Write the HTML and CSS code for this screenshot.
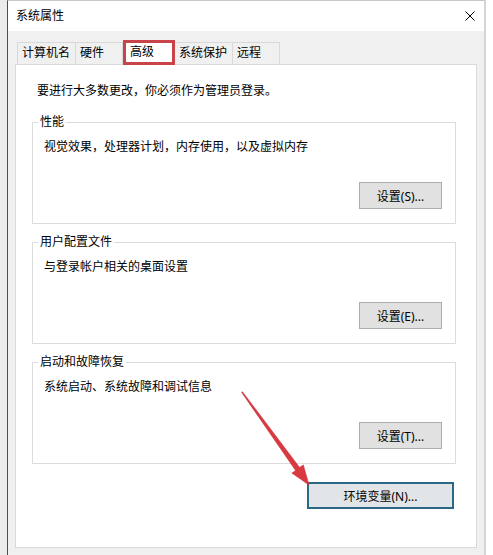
FILE: index.html
```html
<!DOCTYPE html>
<html lang="zh-CN">
<head>
    <meta charset="UTF-8">
    <meta name="viewport" content="width=device-width, initial-scale=1.0">
    <title>系统属性</title>
    <link rel="stylesheet" href="styles.css">
</head>
<body>
    <div class="window">
        <div class="titlebar">
            <span class="title">系统属性</span>
            <svg class="close" width="10" height="10" viewBox="0 0 10 10">
                <path d="M0.5 0.5L9.5 9.5M9.5 0.5L0.5 9.5" stroke="#000" stroke-width="1" fill="none"/>
            </svg>
        </div>
        <div class="sheet">
            <div class="tabs">
                <div class="tab first">计算机名</div>
                <div class="tab">硬件</div>
                <div class="tab active-tab">高级</div>
                <div class="tab">系统保护</div>
                <div class="tab">远程</div>
            </div>
            <div class="panel">
                <p class="notice">要进行大多数更改，你必须作为管理员登录。</p>

                <fieldset class="group">
                    <legend>性能</legend>
                    <p class="desc">视觉效果，处理器计划，内存使用，以及虚拟内存</p>
                    <div class="actions"><button class="btn">设置(S)...</button></div>
                </fieldset>

                <fieldset class="group">
                    <legend>用户配置文件</legend>
                    <p class="desc">与登录帐户相关的桌面设置</p>
                    <div class="actions"><button class="btn">设置(E)...</button></div>
                </fieldset>

                <fieldset class="group">
                    <legend>启动和故障恢复</legend>
                    <p class="desc">系统启动、系统故障和调试信息</p>
                    <div class="actions"><button class="btn">设置(T)...</button></div>
                </fieldset>

                <div class="env-row">
                    <button class="btn btn-default">环境变量(N)...</button>
                </div>
            </div>
        </div>
    </div>

    <!-- pointer arrow drawn on top of the dialog -->
    <svg class="arrow" width="493" height="555" viewBox="0 0 493 555">
        <polygon points="242.4,391.7 299.6,467.5 303.3,464.9 309,485 291.9,473.1 295.6,470.5 241.6,392.3"
                 fill="#d9393f" stroke="#c7323a" stroke-width="0.6" stroke-linejoin="round"/>
    </svg>
</body>
</html>
```

FILE: styles.css
```css
* {
    box-sizing: border-box;
}
body {
    margin: 0;
    background: #fff;
    font-family: "Noto Sans", "Noto Sans CJK SC", sans-serif;
    font-size: 12px;
    color: #000;
    position: relative;
    overflow: hidden;
}
.window {
    margin-left: 7px;
    width: 479px;
    height: 555px;
    display: flex;
    flex-direction: column;
    border-top: 1px solid #c6c6c6;
    border-left: 1px solid #4d4d4d;
    border-right: 2px solid #d6d6d6;
    background: #f0f0f0;
    box-shadow: -7px 0 0 #ebebeb;
}
.titlebar {
    height: 30px;
    background: #fff;
    display: flex;
    align-items: center;
    justify-content: space-between;
    padding: 0 9px 0 8px;
    line-height: 16px;
}
.sheet {
    flex: 1;
    display: flex;
    flex-direction: column;
    padding: 9px 7px 7px;
}
.tabs {
    display: flex;
    align-items: flex-end;
    padding-left: 2px;
}
.tab {
    height: 22px;
    min-width: 47px;
    padding: 0 5px 0 4px;
    line-height: 20px;
    border-top: 1px solid #d9d9d9;
    border-right: 1px solid #d9d9d9;
    background: #f0f0f0;
}
.tab.first {
    border-left: 1px solid #d9d9d9;
}
.active-tab {
    position: relative;
    z-index: 1;
    height: 25px;
    min-width: 52px;
    margin-bottom: -1px;
    line-height: 17px;
    border: 3px solid #c9434b;
    background: #fff;
}
.panel {
    flex: 1;
    background: #fff;
    border: 1px solid #d9d9d9;
    padding: 18px 20px 0 16px;
}
.notice {
    margin: 0;
    padding-left: 5px;
    line-height: 16px;
}
.group {
    margin: 15px 0 0;
    padding: 9px 13px 14px 11px;
    border: 1px solid #dcdcdc;
    min-inline-size: 0;
}
.group + .group {
    margin-top: 10px;
}
.group legend {
    padding: 0 2px;
    margin-left: -6px;
    line-height: 16px;
}
.desc {
    margin: 0;
    line-height: 16px;
}
.actions {
    display: flex;
    justify-content: flex-end;
    margin-top: 27px;
}
.btn {
    width: 83px;
    height: 27px;
    padding: 0;
    font-family: inherit;
    font-size: 12px;
    color: #000;
    background: #e1e1e1;
    border: 1px solid #adadad;
}
.env-row {
    display: flex;
    justify-content: flex-end;
    margin-top: 18px;
    padding-right: 2px;
}
.btn-default {
    width: 147px;
    background: #e2e5e7;
    border: 2px solid #2b6786;
}
.arrow {
    position: absolute;
    top: 0;
    left: 0;
    pointer-events: none;
}
```
